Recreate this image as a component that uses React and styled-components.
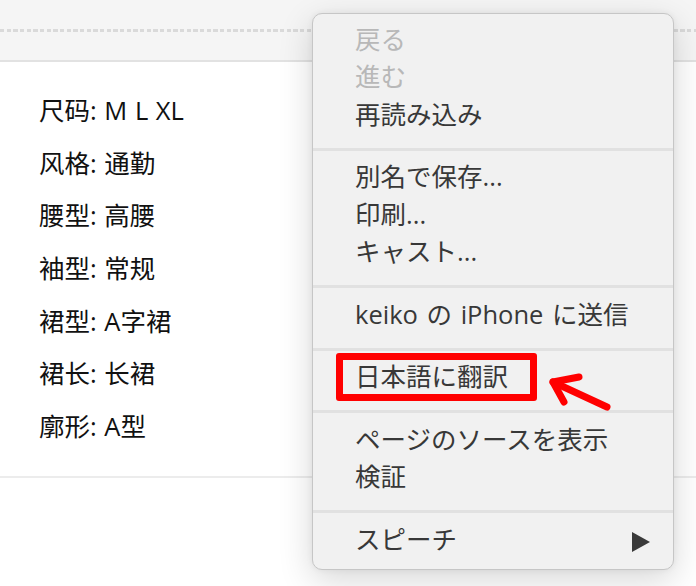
import React from "react";
import styled, { createGlobalStyle } from "styled-components";

const Global = createGlobalStyle`
  html, body { margin: 0; padding: 0; background: #ffffff; }
  body { width: 696px; height: 586px; overflow: hidden; }
`;

const Page = styled.div`
  position: relative;
  width: 696px;
  height: 586px;
  background: #ffffff;
  font-family: "Open Sans", "Noto Sans CJK SC", sans-serif;
`;

const TopBar = styled.div`
  height: 62px;
  background: #f5f5f5;
  border-bottom: 2px solid #e2e2e2;
  display: flex;
  align-items: flex-start;
  padding-top: 29px;
  box-sizing: border-box;
`;

const Dots = styled.div`
  flex: 1;
  height: 3px;
  background: repeating-linear-gradient(90deg, #dadada 0 4.3px, transparent 4.3px 6.67px);
`;

const Content = styled.ul`
  list-style: none;
  margin: 0;
  padding: 22px 0 23px 39px;
  border-bottom: 2px solid #ececec;
`;

const Spec = styled.li`
  height: 52.67px;
  line-height: 52.67px;
  font-size: 25.5px;
  word-spacing: 1px;
  color: #111;
`;

const Menu = styled.div`
  position: absolute;
  left: 312px;
  top: 13px;
  width: 362px;
  box-sizing: border-box;
  padding: 9px 0 8px;
  background: #f1f1f1;
  border: 1px solid #c6c6c6;
  border-radius: 10px;
  box-shadow: 0 10px 34px rgba(0, 0, 0, 0.16), 0 0 6px rgba(0, 0, 0, 0.06);
  font-family: "Open Sans", "Noto Sans CJK JP", sans-serif;
`;

const Item = styled.div`
  display: flex;
  align-items: center;
  justify-content: space-between;
  box-sizing: border-box;
  height: 37.5px;
  padding: 0 23px 5px 42px;
  font-size: 25.5px;
  line-height: 1.2;
  word-spacing: 2px;
  color: ${(p) => (p.$disabled ? "#b8b8b8" : "#383838")};
`;

const Separator = styled.div`
  height: 3px;
  margin: 12px 0 10px;
  background: #e1e1e1;
`;

const Highlight = styled.span`
  position: relative;
  &::after {
    content: "";
    position: absolute;
    left: -19px;
    right: -29px;
    top: -8px;
    bottom: -9px;
    border: 7px solid #ff0000;
    border-radius: 3px;
  }
`;

const Arrow = styled.svg`
  position: absolute;
  left: 540px;
  top: 368px;
  overflow: visible;
`;

const Triangle = styled.svg`
  display: block;
  margin-top: 5px;
`;

const menu = [
  [
    { t: "戻る", d: true },
    { t: "進む", d: true },
    { t: "再読み込み" },
  ],
  [{ t: "別名で保存..." }, { t: "印刷..." }, { t: "キャスト..." }],
  [{ t: "keiko の iPhone に送信" }],
  [{ t: "日本語に翻訳", h: true }],
  [{ t: "ページのソースを表示" }, { t: "検証" }],
  [{ t: "スピーチ", sub: true }],
];

const specs = [
  "尺码: M L XL",
  "风格: 通勤",
  "腰型: 高腰",
  "袖型: 常规",
  "裙型: A字裙",
  "裙长: 长裙",
  "廓形: A型",
];

export default function App() {
  return (
    <Page>
      <Global />
      <TopBar>
        <Dots />
      </TopBar>
      <Content>
        {specs.map((s) => (
          <Spec key={s}>{s}</Spec>
        ))}
      </Content>
      <Menu>
        {menu.map((group, gi) => (
          <React.Fragment key={gi}>
            {gi > 0 && <Separator />}
            {group.map((it) => (
              <Item key={it.t} $disabled={it.d}>
                {it.h ? <Highlight>{it.t}</Highlight> : <span>{it.t}</span>}
                {it.sub && (
                  <Triangle width="18" height="20" viewBox="0 0 18 20">
                    <path d="M0 0 L18 10 L0 20 Z" fill="#3a3a3a" />
                  </Triangle>
                )}
              </Item>
            ))}
          </React.Fragment>
        ))}
      </Menu>
      <Arrow width="80" height="50" viewBox="540 368 80 50">
        <g stroke="#ff0000" strokeWidth="7" strokeLinecap="round" strokeLinejoin="round" fill="none">
          <path d="M607 407 L553 382" />
          <path d="M579 377 L553 382 L564 402" />
        </g>
      </Arrow>
    </Page>
  );
}
